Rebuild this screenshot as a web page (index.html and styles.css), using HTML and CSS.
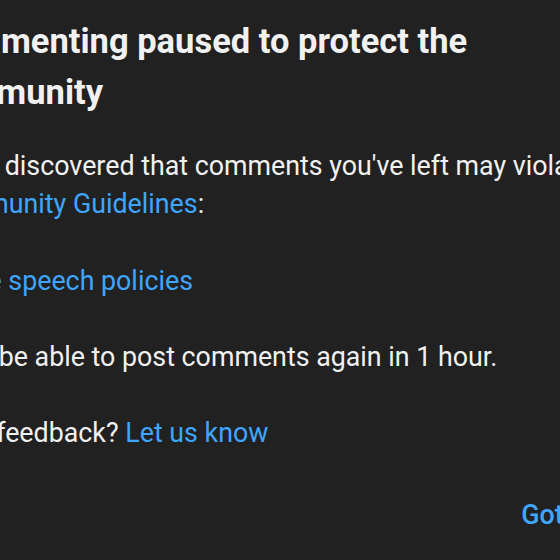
FILE: index.html
```html
<!DOCTYPE html>
<html lang="en">
<head>
  <meta charset="UTF-8">
  <meta name="viewport" content="width=device-width, initial-scale=1.0">
  <title>Commenting paused</title>
  <link rel="stylesheet" href="styles.css">
</head>
<body>
  <div class="dialog">
    <h2 class="dialog-title">Commenting paused to protect the community</h2>
    <p>We've discovered that comments you've left may violate our <a href="#">Community Guidelines</a>:</p>
    <ul class="policy-list">
      <li><a href="#">Hate speech policies</a></li>
    </ul>
    <p>You'll be able to post comments again in 1 hour.</p>
    <p>Have feedback? <a href="#">Let us know</a></p>
    <div class="dialog-actions">
      <button class="btn-text">Got it</button>
    </div>
  </div>
</body>
</html>
```

FILE: styles.css
```css
html, body {
  height: 100%;
}

body {
  margin: 0;
  background-color: #212121;
  color: #f1f1f1;
  font-family: Roboto, "Liberation Sans", Arial, sans-serif;
  overflow: hidden;
}

/* the dialog is wider than the window, its left side runs off screen */
.dialog {
  width: 740px;
  margin-left: -71px;
  padding-top: 16px;
}

.dialog-title {
  max-width: 600px;
  margin: 0 0 29px;
  font-size: 34.5px;
  font-weight: 700;
  line-height: 51px;
}

.dialog p {
  margin: 0 0 38px;
  font-size: 26.8px;
  line-height: 38px;
}

.policy-list {
  list-style: none;
  margin: 39px 0 38px;
  padding-left: 16px;
  font-size: 26.8px;
  line-height: 38px;
}

.dialog a {
  color: #3ea6ff;
  text-decoration: none;
}

.dialog-actions {
  display: flex;
  justify-content: flex-end;
  padding-top: 6px;
  padding-right: 67px;
}

.btn-text {
  background: none;
  border: none;
  padding: 0 16px;
  color: #3ea6ff;
  font-family: inherit;
  font-size: 26.8px;
  font-weight: 500;
  line-height: 38px;
}
```
